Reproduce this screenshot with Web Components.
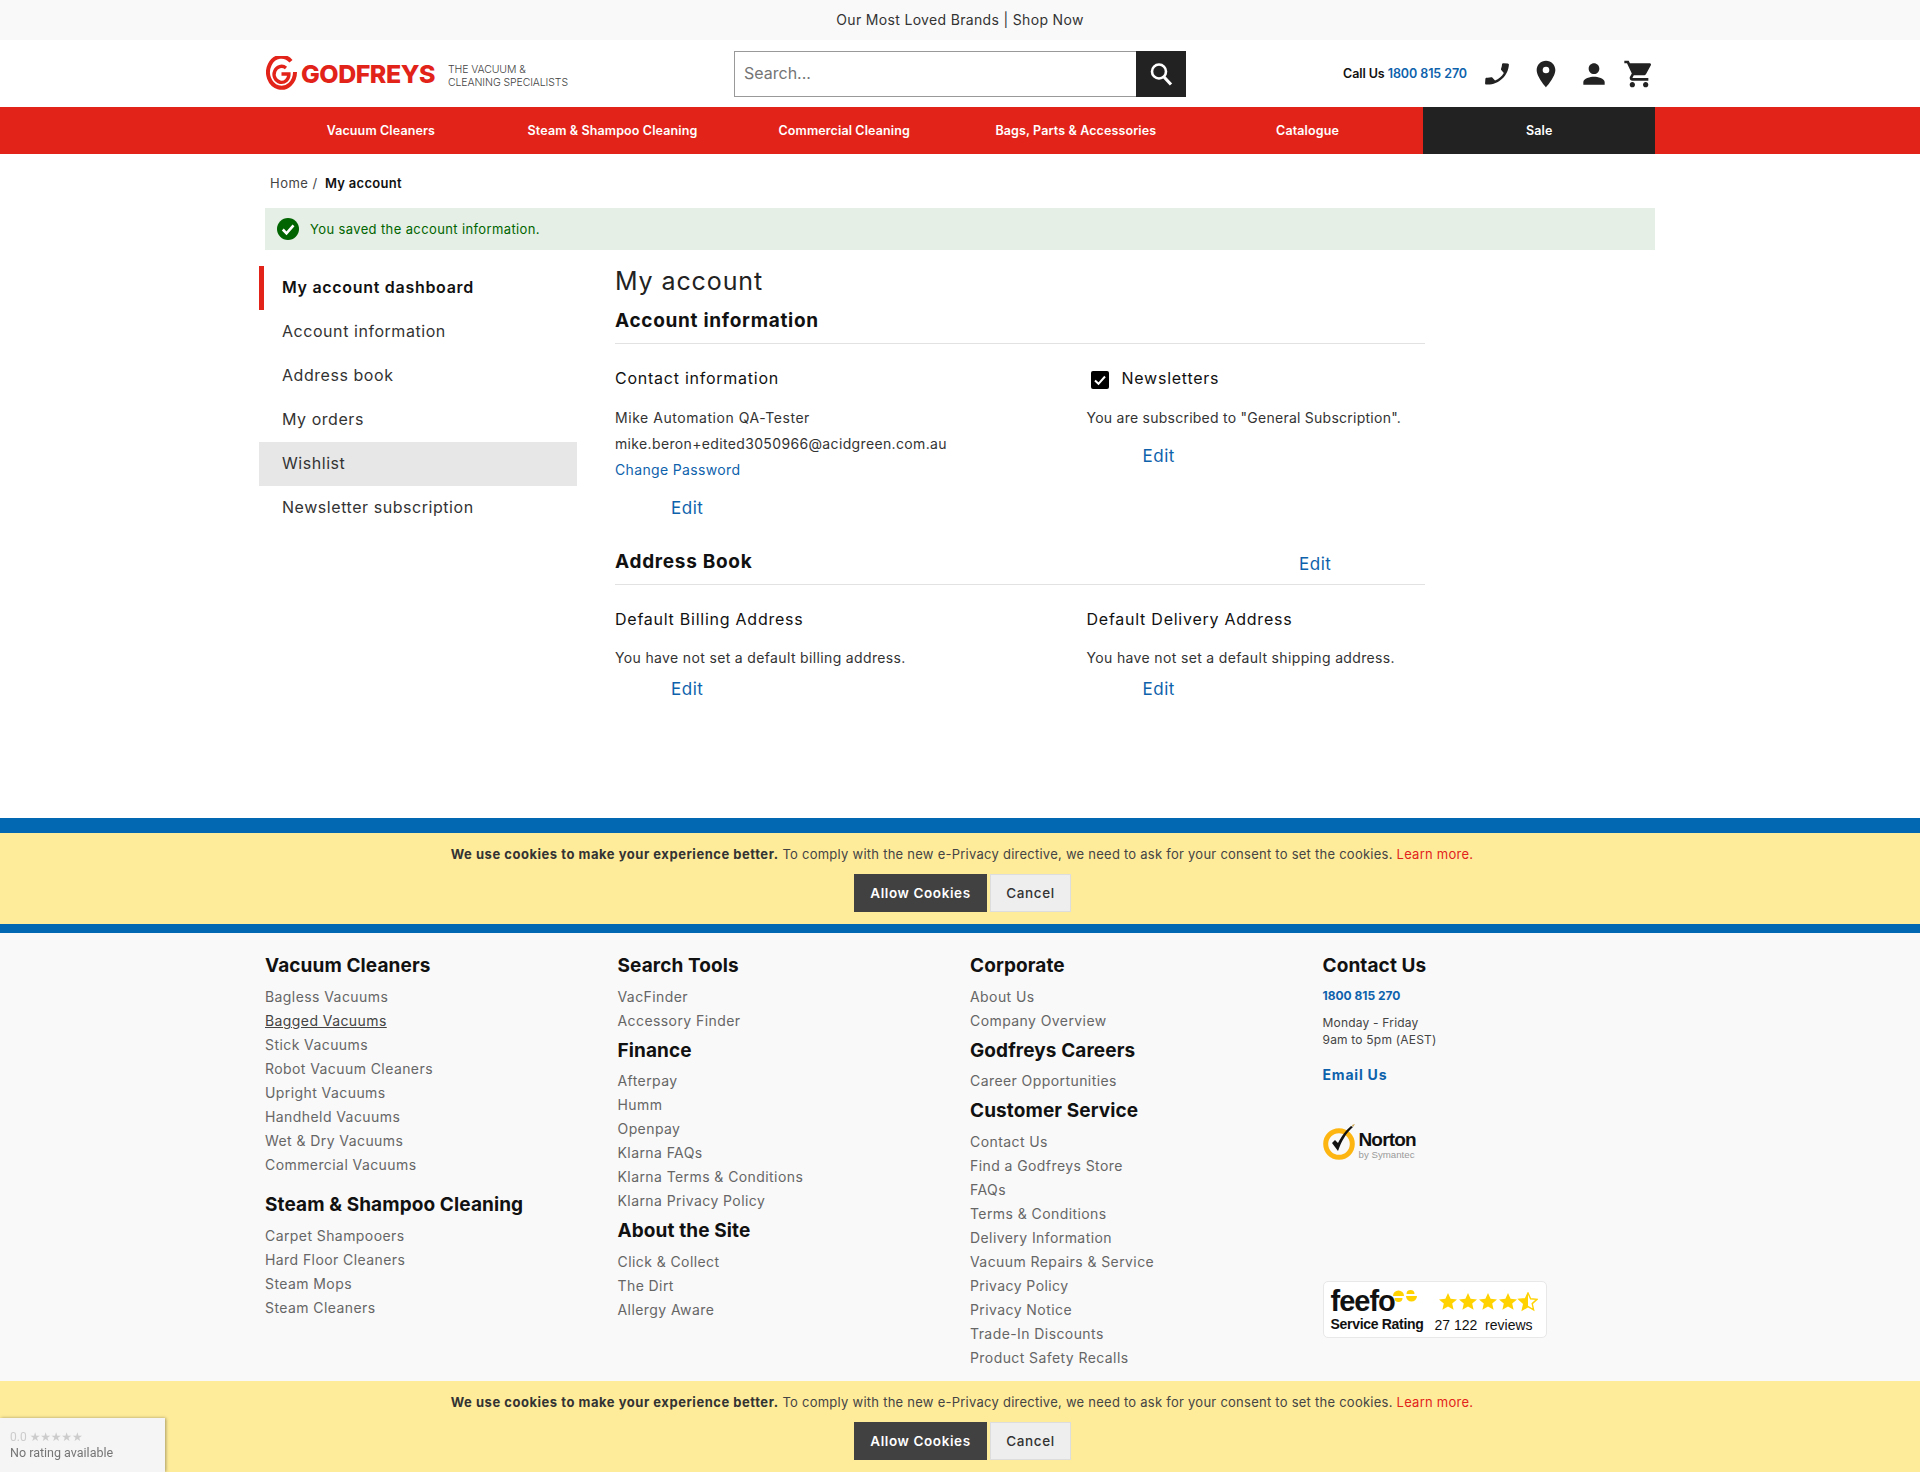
<!DOCTYPE html>
<html>
<head>
<meta charset="utf-8">
<title>My account</title>
<style>
  html, body { margin: 0; padding: 0; }
  body {
    background: #fff;
    color: #333;
    font-family: Inter, "Noto Sans", sans-serif;
    font-size: 14px;
    height: 1472px;
    overflow: hidden;
  }
</style>
</head>
<body>
<top-strip>Our Most Loved Brands | Shop Now</top-strip>
<site-header></site-header>
<main-nav></main-nav>
<account-page></account-page>
<cookie-notice bars></cookie-notice>
<site-footer></site-footer>
<cookie-notice fixed></cookie-notice>
<rating-badge></rating-badge>

<script>
class TopStrip extends HTMLElement {
    constructor() {
        super();
        this.attachShadow({mode: "open"});
        this.shadowRoot.innerHTML = `<style>
          :host { display: block; height: 40px; line-height: 40px; background: #f9f9f9; text-align: center; font-size: 14px; letter-spacing: .33px; color: #333; }
        </style><slot></slot>`;
    }
}
customElements.define("top-strip", TopStrip);

class GodfreysLogo extends HTMLElement {
    constructor() {
        super();
        this.attachShadow({mode: "open"});
        this.shadowRoot.innerHTML = `<style>
          :host { display: flex; align-items: center; }
          svg { display: block; margin: 0 3px 0 1px; }
          .name { font-weight: 800; font-size: 25px; color: #e2231a; letter-spacing: -.5px; width: 134px; white-space: nowrap; }
          .tag { margin-left: 13px; padding-top: 4px; font-size: 10.5px; line-height: 13px; font-weight: 300; color: #444; letter-spacing: -.1px; white-space: nowrap; }
        </style>
        <svg width="32" height="36" viewBox="0 0 32 36" fill="none" stroke="#e2231a" stroke-linecap="butt">
          <path d="M25 5.2A13.5 15.5 0 1 0 29 16" stroke-width="4"/>
          <path d="M20 12A7.4 8 0 1 0 22.9 18H15.5" stroke-width="3.4"/>
        </svg>
        <span class="name">GODFREYS</span>
        <span class="tag">THE VACUUM &amp;<br>CLEANING SPECIALISTS</span>`;
    }
}
customElements.define("godfreys-logo", GodfreysLogo);

class SiteHeader extends HTMLElement {
    constructor() {
        super();
        this.attachShadow({mode: "open"});
        this.shadowRoot.innerHTML = `<style>
          :host { display: grid; grid-template-columns: 469px 452px 1fr; width: 1390px; height: 67px; margin: 0 auto; align-items: center; }
          .search { display: flex; height: 46px; box-sizing: border-box; }
          .search .box { flex: 1; border: 1px solid #999; border-right: 0; box-sizing: border-box; padding-left: 9px; line-height: 42px; font-size: 16px; color: #757575; }
          .search .btn { width: 50px; background: #222; display: grid; place-items: center; }
          .right { display: flex; align-items: center; justify-content: flex-end; height: 46px; }
          .call { font-size: 12.5px; font-weight: 600; color: #111; margin-right: 15px; white-space: nowrap; letter-spacing: -.08px; }
          .call b { font-weight: 600; color: #0e62ac; }
          svg { display: block; fill: #222; }
          .i1 { margin-right: 18px; transform: scaleX(-1) rotate(-4deg); }
          .i2 { margin-right: 16px; }
          .i3 { margin-right: 13px; }
          .i4 { margin-right: 0; }
        </style>
        <godfreys-logo></godfreys-logo>
        <div class="search">
          <div class="box">Search...</div>
          <div class="btn"><svg width="26" height="26" viewBox="0 0 26 26" style="fill:none;stroke:#fff"><circle cx="11" cy="10.5" r="7" stroke-width="2.6"/><path d="M16 16l7 7.5" stroke-width="3.2"/></svg></div>
        </div>
        <div class="right">
          <span class="call">Call Us <b>1800 815 270</b></span>
          <svg class="i1" width="30" height="30" viewBox="0 0 24 24"><path d="M6.62 10.79c1.44 2.83 3.76 5.14 6.59 6.59l2.2-2.2c.27-.27.67-.36 1.02-.24 1.12.37 2.33.57 3.57.57.55 0 1 .45 1 1V20c0 .55-.45 1-1 1-9.39 0-17-7.61-17-17 0-.55.45-1 1-1h3.5c.55 0 1 .45 1 1 0 1.25.2 2.45.57 3.57.11.35.03.74-.25 1.02l-2.2 2.2z"/></svg>
          <svg class="i2" width="32" height="32" viewBox="0 0 24 24"><path d="M12 2C8.13 2 5 5.13 5 9c0 5.25 7 13 7 13s7-7.75 7-13c0-3.87-3.13-7-7-7zm0 9.5a2.5 2.5 0 0 1 0-5 2.5 2.5 0 0 1 0 5z"/></svg>
          <svg class="i3" width="32" height="32" viewBox="0 0 24 24"><path d="M12 12c2.21 0 4-1.79 4-4s-1.79-4-4-4-4 1.79-4 4 1.79 4 4 4zm0 2c-2.67 0-8 1.34-8 4v2h16v-2c0-2.66-5.33-4-8-4z"/></svg>
          <svg class="i4" width="32" height="32" viewBox="0 0 24 24"><path d="M7 18c-1.1 0-1.99.9-1.99 2S5.9 22 7 22s2-.9 2-2-.9-2-2-2zM1 2v2h2l3.6 7.59-1.35 2.45c-.16.28-.25.61-.25.96 0 1.1.9 2 2 2h12v-2H7.42c-.14 0-.25-.11-.25-.25l.03-.12.9-1.63h7.45c.75 0 1.41-.41 1.75-1.03l3.58-6.49c.08-.14.12-.31.12-.48 0-.55-.45-1-1-1H5.21l-.94-2H1zm16 16c-1.1 0-1.99.9-1.99 2s.89 2 1.99 2 2-.9 2-2-.9-2-2-2z"/></svg>
        </div>`;
    }
}
customElements.define("site-header", SiteHeader);

class MainNav extends HTMLElement {
    constructor() {
        super();
        this.attachShadow({mode: "open"});
        let items = ["Vacuum Cleaners", "Steam & Shampoo Cleaning", "Commercial Cleaning", "Bags, Parts & Accessories", "Catalogue", "Sale"];
        this.shadowRoot.innerHTML = `<style>
          :host { display: block; background: #e2231a; }
          .row { display: grid; grid-template-columns: repeat(6, 1fr); width: 1390px; margin: 0 auto; height: 47px; }
          .row div { text-align: center; line-height: 47px; color: #fff; font-size: 12.5px; font-weight: 600; white-space: nowrap; letter-spacing: .12px; }
          .row div:last-child { background: #222; }
        </style><div class="row">${items.map(i => `<div>${i.replace("&", "&amp;")}</div>`).join("")}</div>`;
    }
}
customElements.define("main-nav", MainNav);

class AccountSidebar extends HTMLElement {
    constructor() {
        super();
        this.attachShadow({mode: "open"});
        let items = ["My account dashboard", "Account information", "Address book", "My orders", "Wishlist", "Newsletter subscription"];
        this.shadowRoot.innerHTML = `<style>
          :host { display: block; margin-left: -6px; width: 318px; }
          div { height: 44px; line-height: 42px; padding-left: 23px; font-size: 16px; color: #333; letter-spacing: .55px; }
          .on { font-weight: 600; color: #111; box-shadow: inset 5px 0 0 #e2231a; letter-spacing: .7px; }
          .hover { background: #e7e7e7; }
        </style>${items.map((t, n) => `<div class="${n == 0 ? "on" : n == 4 ? "hover" : ""}">${t}</div>`).join("")}`;
    }
}
customElements.define("account-sidebar", AccountSidebar);

class AccountPage extends HTMLElement {
    constructor() {
        super();
        this.attachShadow({mode: "open"});
        this.shadowRoot.innerHTML = `<style>
          :host { display: block; width: 1390px; height: 664px; margin: 0 auto; }
          a { color: #0e62ac; text-decoration: none; }
          .crumbs { height: 54px; line-height: 59px; padding-left: 5px; font-size: 13px; color: #444; box-sizing: border-box; letter-spacing: .5px; }
          .crumbs b { font-weight: 600; color: #111; margin-left: 3px; letter-spacing: .3px; }
          .msg { height: 42px; background: #e5efe5; color: #006400; display: flex; align-items: center; font-size: 13px; letter-spacing: .38px; }
          .msg svg { display: block; margin: 0 11px 0 12px; }
          .cols { display: grid; grid-template-columns: 350px 810px; margin-top: 16px; }
          h1 { margin: 0 0 13px; font-size: 25px; line-height: 30px; font-weight: 400; color: #222; letter-spacing: .9px; }
          .title { font-size: 19px; line-height: 24px; font-weight: 700; color: #111; padding-bottom: 10px; border-bottom: 1px solid #e2e2e2; letter-spacing: .7px; }
          .title.ab { display: grid; grid-template-columns: 684px 1fr; margin-top: 30px; padding-bottom: 8px; }
          .title.ab a { font-size: 17px; font-weight: 400; padding-top: 2px; letter-spacing: .5px; }
          .two { display: grid; grid-template-columns: 471.5px 1fr; padding-top: 22px; }
          h3 { margin: 0; font-size: 16px; line-height: 24px; font-weight: 400; color: #111; letter-spacing: .75px; }
          .text { font-size: 14px; line-height: 26px; margin-top: 15px; letter-spacing: .35px; white-space: nowrap; }
          .edit { display: block; font-size: 17px; line-height: 24px; padding-left: 56px; letter-spacing: .5px; }
          .check { display: flex; }
          .check svg { display: block; margin: 5px 13px 0 4px; }
        </style>
        <div class="crumbs">Home / <b>My account</b></div>
        <div class="msg">
          <svg width="22" height="22" viewBox="0 0 22 22"><circle cx="11" cy="11" r="11" fill="#006400"/><path d="M5.8 11.5l3.7 3.8 7-8" fill="none" stroke="#fff" stroke-width="2.6"/></svg>
          You saved the account information.
        </div>
        <div class="cols">
          <account-sidebar></account-sidebar>
          <div>
            <h1>My account</h1>
            <div class="title">Account information</div>
            <div class="two">
              <div>
                <h3>Contact information</h3>
                <div class="text"><span style="letter-spacing:.55px">Mike Automation QA-Tester</span><br>mike.beron+edited3050966@acidgreen.com.au<br><a>Change Password</a></div>
                <a class="edit" style="margin-top:13px">Edit</a>
              </div>
              <div>
                <div class="check">
                  <svg width="18" height="18" viewBox="0 0 18 18"><rect width="18" height="18" rx="2" fill="#000"/><path d="M4 9.5l3.5 3.3L14 5.5" fill="none" stroke="#fff" stroke-width="2"/></svg>
                  <h3>Newsletters</h3>
                </div>
                <div class="text" style="letter-spacing:.25px">You are subscribed to "General Subscription".</div>
                <a class="edit" style="margin-top:13px">Edit</a>
              </div>
            </div>
            <div class="title ab"><span>Address Book</span><a>Edit</a></div>
            <div class="two">
              <div>
                <h3>Default Billing Address</h3>
                <div class="text" style="margin-top:14px">You have not set a default billing address.</div>
                <a class="edit" style="margin-top:6px">Edit</a>
              </div>
              <div>
                <h3>Default Delivery Address</h3>
                <div class="text" style="margin-top:14px">You have not set a default shipping address.</div>
                <a class="edit" style="margin-top:6px">Edit</a>
              </div>
            </div>
          </div>
        </div>`;
    }
}
customElements.define("account-page", AccountPage);

class CookieNotice extends HTMLElement {
    constructor() {
        super();
        this.attachShadow({mode: "open"});
        this.shadowRoot.innerHTML = `<style>
          :host { display: block; background: #ffec9a; text-align: center; height: 91px; box-sizing: content-box; font-size: 13px; color: #444; }
          :host([bars]) { border-top: 15px solid #0168b1; border-bottom: 9px solid #0168b1; }
          :host([fixed]) { position: fixed; left: 0; right: 0; bottom: 0; }
          p { margin: 0; padding: 11px 0 0 4px; line-height: 20px; letter-spacing: .25px; white-space: nowrap; }
          b { font-weight: 700; color: #333; letter-spacing: .53px; }
          a { color: #e2231a; }
          .btns { display: flex; justify-content: center; gap: 3px; margin-top: 10px; padding-left: 5px; }
          .btns div { height: 38px; line-height: 38px; box-sizing: border-box; font-size: 13.5px; font-weight: 500; letter-spacing: .6px; }
          .allow { width: 133px; background: #414141; color: #fff; font-weight: 600 !important; }
          .cancel { width: 81px; background: #eee; border: 1px solid #ddd; line-height: 36px !important; color: #333; }
        </style>
        <p><b>We use cookies to make your experience better.</b> To comply with the new e-Privacy directive, we need to ask for your consent to set the cookies. <a>Learn more.</a></p>
        <div class="btns"><div class="allow">Allow Cookies</div><div class="cancel">Cancel</div></div>`;
    }
}
customElements.define("cookie-notice", CookieNotice);

class LinkGroup extends HTMLElement {
    constructor() {
        super();
        this.attachShadow({mode: "open"});
        let links = this.getAttribute("links").split("|");
        this.shadowRoot.innerHTML = `<style>
          :host { display: block; margin-bottom: 5px; }
          h4 { margin: 0 0 7px; padding-top: 1px; font-size: 19px; line-height: 24px; font-weight: 700; color: #111; white-space: nowrap; letter-spacing: .1px; }
          :host([tight]) h4 { margin-bottom: 6px; }
          div { font-size: 14px; line-height: 24px; color: #666; letter-spacing: .42px; white-space: nowrap; }
          .u { text-decoration: underline; color: #444; }
        </style><h4>${this.getAttribute("heading")}</h4>
        ${links.map(l => `<div class="${l == this.getAttribute("under") ? "u" : ""}">${l.replace(/&/g, "&amp;")}</div>`).join("")}`;
    }
}
customElements.define("link-group", LinkGroup);

class SiteFooter extends HTMLElement {
    constructor() {
        super();
        this.attachShadow({mode: "open"});
        let star = "M10 1l2.6 5.8 6.4.6-4.8 4.2 1.4 6.2L10 14.6l-5.6 3.2 1.4-6.2L1 7.4l6.4-.6z";
        this.shadowRoot.innerHTML = `<style>
          :host { display: block; background: #f9f9f9; height: 539px; }
          .wrap { width: 1410px; margin: 0 auto; padding: 20px 0 0; display: grid; grid-template-columns: repeat(4, 352.5px); transform: translateX(10px); }
          h4 { margin: 0 0 7px; padding-top: 1px; font-size: 19px; line-height: 24px; font-weight: 700; color: #111; letter-spacing: .1px; }
          .tel { font-size: 12px; font-weight: 700; color: #0e62ac; line-height: 24px; margin-top: -1px; }
          .hours { font-size: 12px; line-height: 17px; color: #444; margin-top: 6px; letter-spacing: .2px; }
          .mail { font-size: 14px; font-weight: 700; color: #0e62ac; line-height: 20px; margin-top: 17px; letter-spacing: .8px; }
          .norton { display: flex; margin-top: 35px; height: 40px; font-family: "Liberation Sans", sans-serif; }
          .norton svg { display: block; margin-right: 2px; }
          .norton b { display: block; font-size: 19px; line-height: 19px; letter-spacing: -.85px; color: #111; margin-top: 10px; }
          .norton span { display: block; font-size: 9.7px; color: #999; line-height: 10px; margin-top: 1px; }
          .feefo { position: relative; margin-top: 121px; width: 224px; height: 57px; box-sizing: border-box; background: #fff; border: 1px solid #e8e8e8; border-radius: 5px; font-family: "Liberation Sans", sans-serif; color: #111; }
          .feefo .logo { position: absolute; left: 7px; top: 2px; font-size: 29px; line-height: 34px; font-weight: 700; letter-spacing: -1px; }
          .feefo .sr { position: absolute; left: 7px; top: 33px; font-size: 14px; line-height: 18px; font-weight: 700; letter-spacing: -.3px; white-space: nowrap; }
          .feefo .rv { position: absolute; left: 111px; top: 34px; font-size: 14px; line-height: 18px; white-space: nowrap; }
          .feefo svg { position: absolute; display: block; }
        </style>
        <div class="wrap">
          <div>
            <link-group style="margin-bottom:15px" heading="Vacuum Cleaners" under="Bagged Vacuums" links="Bagless Vacuums|Bagged Vacuums|Stick Vacuums|Robot Vacuum Cleaners|Upright Vacuums|Handheld Vacuums|Wet & Dry Vacuums|Commercial Vacuums"></link-group>
            <link-group heading="Steam &amp; Shampoo Cleaning" links="Carpet Shampooers|Hard Floor Cleaners|Steam Mops|Steam Cleaners"></link-group>
          </div>
          <div>
            <link-group heading="Search Tools" links="VacFinder|Accessory Finder"></link-group>
            <link-group tight heading="Finance" links="Afterpay|Humm|Openpay|Klarna FAQs|Klarna Terms & Conditions|Klarna Privacy Policy"></link-group>
            <link-group heading="About the Site" links="Click & Collect|The Dirt|Allergy Aware"></link-group>
          </div>
          <div>
            <link-group heading="Corporate" links="About Us|Company Overview"></link-group>
            <link-group tight heading="Godfreys Careers" links="Career Opportunities"></link-group>
            <link-group heading="Customer Service" links="Contact Us|Find a Godfreys Store|FAQs|Terms & Conditions|Delivery Information|Vacuum Repairs & Service|Privacy Policy|Privacy Notice|Trade-In Discounts|Product Safety Recalls"></link-group>
          </div>
          <div>
            <h4>Contact Us</h4>
            <div class="tel">1800 815 270</div>
            <div class="hours">Monday - Friday<br>9am to 5pm (AEST)</div>
            <div class="mail">Email Us</div>
            <div class="norton">
              <svg width="34" height="40" viewBox="0 0 34 40" style="overflow:visible"><circle cx="16" cy="24" r="13.3" fill="none" stroke="#fdb511" stroke-width="5"/><path d="M9 23l6 8C18 22 23 13 30 7l-2-1C23 10 18 17 15 23l-3-3z" fill="#111"/><path d="M30 7l2-3-3 1z" fill="#c9a24a"/></svg>
              <div><b>Norton</b><span>by Symantec</span></div>
            </div>
            <div class="feefo">
              <div class="logo">feefo</div>
              <svg style="left:69px;top:7px" width="24" height="14" viewBox="0 0 24 14"><path d="M0 7a5.5 5.5 0 0 1 11 0zM1.5 9h8a4 4 0 0 1-8 0zM13.5 5a4 4 0 0 1 8 0zM13 7h11a5.5 5.5 0 0 1-11 0z" fill="#ffd200"/></svg>
              <svg style="left:114px;top:10px" width="100" height="20" viewBox="0 0 100 20">
                <path d="${star}" fill="#ffd200"/>
                <path transform="translate(20)" d="${star}" fill="#ffd200"/>
                <path transform="translate(40)" d="${star}" fill="#ffd200"/>
                <path transform="translate(60)" d="${star}" fill="#ffd200"/>
                <path transform="translate(80)" d="${star}" fill="none" stroke="#ffd200" stroke-width="1.4"/>
                <path transform="translate(80)" d="M10 1v13.6l-5.6 3.2 1.4-6.2L1 7.4l6.4-.6z" fill="#ffd200"/>
              </svg>
              <div class="sr">Service Rating</div>
              <div class="rv">27 122&nbsp; reviews</div>
            </div>
          </div>
        </div>`;
    }
}
customElements.define("site-footer", SiteFooter);

class RatingBadge extends HTMLElement {
    constructor() {
        super();
        this.attachShadow({mode: "open"});
        this.shadowRoot.innerHTML = `<style>
          :host { position: fixed; left: 0; bottom: 0; width: 165px; height: 54px; background: #f5f5f5; box-shadow: 1px 0 3px rgba(0,0,0,.35); font-family: Roboto, sans-serif; box-sizing: border-box; padding: 13px 0 0 10px; }
          .top { font-size: 12px; line-height: 13px; color: #ccc; display: flex; align-items: center; gap: 3px; }
          .stars { color: #ccc; font-family: "DejaVu Sans", sans-serif; font-size: 12px; letter-spacing: -.2px; }
          .txt { font-size: 12.5px; line-height: 16px; color: #757575; margin-top: 1px; white-space: nowrap; }
        </style>
        <div class="top">0.0 <span class="stars">★★★★★</span></div>
        <div class="txt">No rating available</div>`;
    }
}
customElements.define("rating-badge", RatingBadge);
</script>
</body>
</html>
